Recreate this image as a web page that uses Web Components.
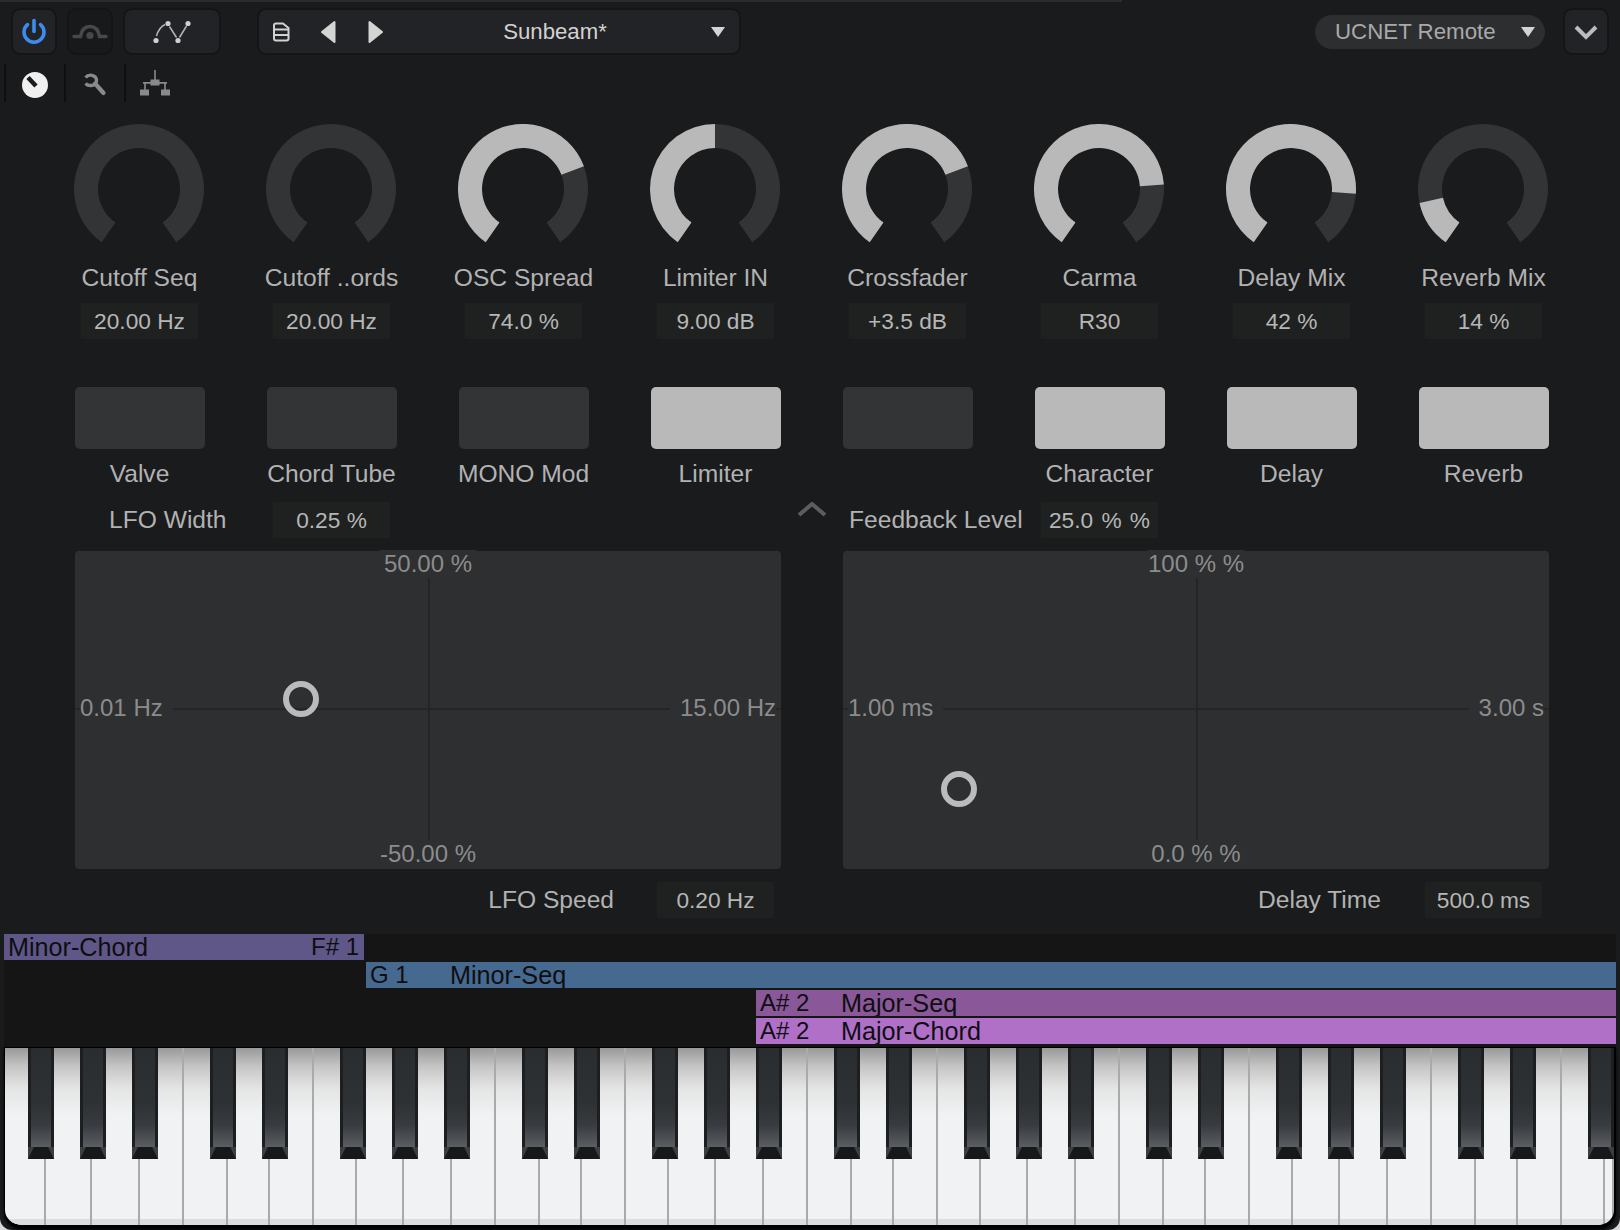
<!DOCTYPE html>
<html>
<head>
<meta charset="utf-8">
<style>
  html, body { margin: 0; background: #d8d8d8; }
  body { font-family: "Liberation Sans", Arial, sans-serif; }
</style>
</head>
<body>
<rs-app>
  <rs-toolbar></rs-toolbar>
  <rs-tabs></rs-tabs>
  <rs-grid8 slot="knobs">
    <rs-knob frac="0">Cutoff Seq<rs-value slot="value">20.00 Hz</rs-value></rs-knob>
    <rs-knob frac="0">Cutoff ..ords<rs-value slot="value">20.00 Hz</rs-value></rs-knob>
    <rs-knob frac="0.74">OSC Spread<rs-value slot="value">74.0 %</rs-value></rs-knob>
    <rs-knob frac="0.5">Limiter IN<rs-value slot="value">9.00 dB</rs-value></rs-knob>
    <rs-knob frac="0.74">Crossfader<rs-value slot="value">+3.5 dB</rs-value></rs-knob>
    <rs-knob frac="0.797">Carma<rs-value slot="value">R30</rs-value></rs-knob>
    <rs-knob frac="0.825">Delay Mix<rs-value slot="value">42 %</rs-value></rs-knob>
    <rs-knob frac="0.147">Reverb Mix<rs-value slot="value">14 %</rs-value></rs-knob>
  </rs-grid8>
  <rs-grid8 slot="toggles">
    <rs-toggle>Valve</rs-toggle>
    <rs-toggle>Chord Tube</rs-toggle>
    <rs-toggle>MONO Mod</rs-toggle>
    <rs-toggle on>Limiter</rs-toggle>
    <rs-toggle></rs-toggle>
    <rs-toggle on>Character</rs-toggle>
    <rs-toggle on>Delay</rs-toggle>
    <rs-toggle on>Reverb</rs-toggle>
  </rs-grid8>
  <rs-xy-section slot="xy">
    <rs-param slot="head-left" style="padding-left:34px"><span style="width:164px">LFO Width</span><rs-value>0.25 %</rs-value></rs-param>
    <rs-param slot="head-right" style="padding-left:6px"><span style="width:192px">Feedback Level</span><rs-value style="word-spacing:2px">25.0 % %</rs-value></rs-param>
    <rs-pad slot="pad-left" hx="226" hy="148" t="50.00 %" b="-50.00 %" l="0.01 Hz" r="15.00 Hz"></rs-pad>
    <rs-pad slot="pad-right" hx="116" hy="238" t="100 % %" b="0.0 % %" l="1.00 ms" r="3.00 s"></rs-pad>
    <rs-param slot="foot-left" style="justify-content:flex-end;padding-right:7px;gap:43px"><span>LFO Speed</span><rs-value>0.20 Hz</rs-value></rs-param>
    <rs-param slot="foot-right" style="justify-content:flex-end;padding-right:7px;gap:44px"><span>Delay Time</span><rs-value>500.0 ms</rs-value></rs-param>
  </rs-xy-section>
  <rs-lanes slot="lanes">
    <rs-note start="0" end="360" color="#5e5788" style="justify-content:space-between"><span style="font-size:25.2px">Minor-Chord</span><span>F# 1</span></rs-note>
    <rs-note start="362" color="#46698f"><span style="width:80px">G 1</span><span style="font-size:25.2px">Minor-Seq</span></rs-note>
    <rs-note start="752" color="#8a5799"><span style="width:81px">A# 2</span><span style="font-size:25.2px">Major-Seq</span></rs-note>
    <rs-note start="752" color="#b070c8"><span style="width:81px">A# 2</span><span style="font-size:25.2px">Major-Chord</span></rs-note>
  </rs-lanes>
  <rs-keyboard slot="keys"></rs-keyboard>
</rs-app>

<script>
class RsApp extends HTMLElement {
  connectedCallback() {
    this.attachShadow({ mode: 'open' });
    this.shadowRoot.innerHTML = `
      <style>
        :host {
          display: block;
          width: 1620px;
          height: 1230px;
          overflow: hidden;
          background: #1a1b1d;
          border-radius: 0 0 12px 12px;
          color: #b2b2b2;
          font: 24.6px/28px "Liberation Sans", Arial, sans-serif;
        }
        .strip { width: 1122px; height: 2px; background: #2b2c2e; }
        .knobs { display: block; margin-top: 22px; }
        .toggles { display: block; margin-top: 47px; }
      </style>
      <div class="strip"></div>
      <slot></slot>
      <div class="knobs"><slot name="knobs"></slot></div>
      <div class="toggles"><slot name="toggles"></slot></div>
      <slot name="xy"></slot>
      <slot name="lanes"></slot>
      <slot name="keys"></slot>
    `;
  }
}

class RsToolbar extends HTMLElement {
  connectedCallback() {
    this.attachShadow({ mode: 'open' });
    this.shadowRoot.innerHTML = `
      <style>
        :host {
          display: flex;
          align-items: center;
          height: 47px;
          margin-top: 6px;
          padding: 0 11px;
        }
        .btn {
          box-sizing: border-box;
          display: flex;
          align-items: center;
          justify-content: center;
          width: 46px;
          height: 47px;
          margin-right: 10px;
          background: #222326;
          border: 2px solid #141517;
          border-radius: 9px;
        }
        .btn.dim { background: #18191b; }
        .btn.wide { width: 98px; margin-right: 36px; }
        .preset {
          box-sizing: border-box;
          display: flex;
          align-items: center;
          width: 484px;
          height: 47px;
          padding: 0 14px 0 13px;
          background: #222326;
          border: 2px solid #141517;
          border-radius: 9px;
          color: #d2d2d2;
          font-size: 22.2px;
        }
        .title { flex: 1; padding-left: 15px; text-align: center; }
        .pill {
          box-sizing: border-box;
          display: flex;
          align-items: center;
          width: 230px;
          height: 34px;
          margin-left: auto;
          padding: 0 10px 0 20px;
          background: #2d2e30;
          border-radius: 17px;
          color: #a9a9a9;
          font-size: 22.3px;
          white-space: nowrap;
        }
        .pill span { flex: 1; }
        .btn.last { margin: 0 0 0 18px; }
        svg { display: block; }
      </style>
      <div class="btn">
        <svg width="28" height="28" viewBox="0 0 28 28" fill="none" stroke="#3d8bef" stroke-width="3.6" stroke-linecap="round">
          <path d="M7.5 6.6a10 10 0 1 0 13 0"/><path d="M14 2.5v11"/>
        </svg>
      </div>
      <div class="btn dim">
        <svg width="38" height="24" viewBox="0 0 38 24" fill="none" stroke="#47484a" stroke-width="3.400" stroke-linecap="round">
          <path d="M3 16.500h6.500C10.500 10 14 6.500 19 6.500s8.500 3.500 9.500 10H35"/>
          <circle cx="19" cy="15.500" r="3.600" fill="#47484a" stroke="none"/>
        </svg>
      </div>
      <div class="btn wide">
        <svg width="42" height="26" viewBox="0 0 42 26" fill="none" stroke="#b4b4b4" stroke-width="1.500">
          <path d="M5.500 17C7 11.500 10 7.500 14 5.500"/><path d="M18.500 7.500L25.500 18.500"/><path d="M28.500 18.500L35.500 7"/>
          <g fill="#cfcfcf" stroke="none">
            <circle cx="5" cy="21.500" r="2.600"/><circle cx="17" cy="4.500" r="2.600"/>
            <circle cx="27" cy="21.500" r="2.600"/><circle cx="37" cy="4.500" r="2.600"/>
          </g>
        </svg>
      </div>
      <div class="preset">
        <svg width="18" height="20" viewBox="0 0 18 20" fill="none" stroke="#d2d2d2" stroke-width="2" stroke-linejoin="round">
          <path d="M2 3.500Q2 1.500 4 1.500H11L16.500 6V16.500Q16.500 18.500 14.500 18.500H4Q2 18.500 2 16.500Z"/>
          <path d="M2 7.500H16.500M2 13H16.500"/>
        </svg>
        <svg style="margin-left:30px" width="16" height="24" viewBox="0 0 16 24" fill="#d4d4d4" stroke="#d4d4d4" stroke-width="2" stroke-linejoin="round">
          <path d="M14.500 2v20L2 12z"/>
        </svg>
        <svg style="margin-left:32px" width="16" height="24" viewBox="0 0 16 24" fill="#d4d4d4" stroke="#d4d4d4" stroke-width="2" stroke-linejoin="round">
          <path d="M1.500 2v20L14 12z"/>
        </svg>
        <div class="title">Sunbeam*</div>
        <svg width="14" height="10" viewBox="0 0 14 10" fill="#d4d4d4"><path d="M0 0h14L7 10z"/></svg>
      </div>
      <div class="pill">
        <span>UCNET Remote</span>
        <svg width="14" height="10" viewBox="0 0 14 10" fill="#d4d4d4"><path d="M0 0h14L7 10z"/></svg>
      </div>
      <div class="btn last">
        <svg width="24" height="16" viewBox="0 0 24 16" fill="none" stroke="#bcbcbc" stroke-width="4">
          <path d="M2 3l10 10L22 3"/>
        </svg>
      </div>
    `;
  }
}

class RsTabs extends HTMLElement {
  connectedCallback() {
    this.attachShadow({ mode: 'open' });
    this.shadowRoot.innerHTML = `
      <style>
        :host {
          display: flex;
          height: 38px;
          margin-top: 9px;
          padding-left: 4px;
        }
        .tab {
          box-sizing: border-box;
          display: flex;
          align-items: center;
          justify-content: center;
          width: 60px;
          border-left: 2px solid #0e0f10;
        }
        svg { display: block; }
      </style>
      <div class="tab">
        <svg width="30" height="38" viewBox="0 0 30 38">
          <circle cx="15" cy="21" r="13" fill="#f0f0f0"/>
          <path d="M16 22L8 13.500" stroke="#1a1b1d" stroke-width="4.500"/>
        </svg>
      </div>
      <div class="tab">
        <svg width="30" height="38" viewBox="0 0 30 38" fill="none" stroke="#8a8a8a">
          <path d="M5.500 13.500C9 9.500 15.500 11 16.500 15.500C17 19 14 22 10.500 21.500C8.500 21.500 6.500 20.500 5.500 19.500" stroke-width="3.400"/>
          <path d="M15 19.500L23.500 29" stroke-width="4.200" stroke-linecap="round"/>
        </svg>
      </div>
      <div class="tab">
        <svg width="32" height="38" viewBox="0 0 32 38" fill="#8a8a8a">
          <path d="M15.200 6h1.600v10h-1.600z"/>
          <rect x="11.500" y="15.500" width="9" height="6"/>
          <path d="M4 18h24v1.800h-1.200v7H25.200v-7H6.800v7H5.200v-7H4z" />
          <rect x="1" y="25.500" width="9" height="6"/>
          <rect x="22" y="25.500" width="9" height="6"/>
        </svg>
      </div>
    `;
  }
}

class RsGrid8 extends HTMLElement {
  connectedCallback() {
    this.attachShadow({ mode: 'open' });
    this.shadowRoot.innerHTML = `
      <style>
        :host {
          display: grid;
          grid-template-columns: repeat(8, 192px);
          padding-left: 43px;
        }
      </style>
      <slot></slot>
    `;
  }
}

class RsValue extends HTMLElement {
  connectedCallback() {
    this.attachShadow({ mode: 'open' });
    this.shadowRoot.innerHTML = `
      <style>
        :host {
          box-sizing: border-box;
          flex: none;
          display: flex;
          align-items: center;
          justify-content: center;
          width: 117px;
          height: 36px;
          background: #1f2121;
          color: #b6b6b6;
          font-size: 22.7px;
          white-space: nowrap;
        }
      </style>
      <slot></slot>
    `;
  }
}

// knob arc runs 290 degrees with the gap at the bottom
function ringPath(cx, cy, a0, a1) {
  const R = 65, r = 41;
  const pt = (rad, a) => {
    const t = a * Math.PI / 180;
    return (cx + rad * Math.sin(t)).toFixed(2) + ' ' + (cy - rad * Math.cos(t)).toFixed(2);
  };
  const big = a1 - a0 > 180 ? 1 : 0;
  return 'M' + pt(R, a0) + 'A' + R + ' ' + R + ' 0 ' + big + ' 1 ' + pt(R, a1) +
    'L' + pt(r, a1) + 'A' + r + ' ' + r + ' 0 ' + big + ' 0 ' + pt(r, a0) + 'Z';
}

class RsKnob extends HTMLElement {
  connectedCallback() {
    const frac = parseFloat(this.getAttribute('frac')) || 0;
    const end = -145 + 290 * frac;
    this.attachShadow({ mode: 'open' });
    this.shadowRoot.innerHTML = `
      <style>
        :host {
          display: flex;
          flex-direction: column;
          align-items: center;
          width: 192px;
          height: 216px;
        }
        svg { display: block; }
        .label { height: 28px; margin: 10px 0 11px 1px; white-space: nowrap; }
        ::slotted(rs-value) { margin-left: 1px; }
      </style>
      <svg width="130" height="130" viewBox="0 0 130 130">
        <path d="${ringPath(65, 65, -145, 145)}" fill="#333436"/>
        ${frac > 0 ? `<path d="${ringPath(65, 65, -145, end)}" fill="#b9b9b9"/>` : ''}
      </svg>
      <div class="label"><slot></slot></div>
      <slot name="value"></slot>
    `;
  }
}

class RsToggle extends HTMLElement {
  connectedCallback() {
    this.attachShadow({ mode: 'open' });
    this.shadowRoot.innerHTML = `
      <style>
        :host {
          display: flex;
          flex-direction: column;
          align-items: center;
          width: 192px;
        }
        .box { width: 130px; height: 62px; margin-left: 2px; background: #333436; border-radius: 5px; }
        :host([on]) .box { background: #b9b9b9; }
        .label { height: 28px; margin: 11px 0 0 1px; white-space: nowrap; }
      </style>
      <div class="box"></div>
      <div class="label"><slot></slot></div>
    `;
  }
}

class RsParam extends HTMLElement {
  connectedCallback() {
    this.attachShadow({ mode: 'open' });
    this.shadowRoot.innerHTML = `
      <style>
        :host {
          display: flex;
          align-items: center;
          height: 36px;
          white-space: nowrap;
        }
      </style>
      <slot></slot>
    `;
  }
}

class RsXySection extends HTMLElement {
  connectedCallback() {
    this.attachShadow({ mode: 'open' });
    this.shadowRoot.innerHTML = `
      <style>
        :host {
          display: grid;
          grid-template-columns: 706px 62px 706px;
          grid-template-rows: 36px 318px 36px;
          row-gap: 13px;
          margin-top: 14px;
          padding-left: 75px;
        }
        .up { display: flex; justify-content: center; }
        svg { display: block; }
      </style>
      <slot name="head-left"></slot>
      <div class="up">
        <svg width="30" height="16" viewBox="0 0 30 16" fill="none" stroke="#5c5d5f" stroke-width="4">
          <path d="M2 13L15 2l13 11"/>
        </svg>
      </div>
      <slot name="head-right"></slot>
      <slot name="pad-left"></slot>
      <div></div>
      <slot name="pad-right"></slot>
      <slot name="foot-left"></slot>
      <div></div>
      <slot name="foot-right"></slot>
    `;
  }
}

class RsPad extends HTMLElement {
  connectedCallback() {
    const a = n => this.getAttribute(n);
    this.attachShadow({ mode: 'open' });
    this.shadowRoot.innerHTML = `
      <style>
        :host {
          position: relative;
          display: grid;
          grid-template-columns: 1fr auto 1fr;
          grid-template-rows: 26px 1fr 26px;
          align-items: center;
          box-sizing: border-box;
          padding: 0 5px 2px;
          background: #2e2f31;
          border-radius: 4px;
          color: #8c8c8c;
          font-size: 24px;
          white-space: nowrap;
        }
        .v { position: absolute; left: 50%; top: 26px; bottom: 28px; width: 2px; background: #242527; }
        .h { position: absolute; left: 0; right: 0; top: 157px; height: 2px; background: #242527; }
        .lab { position: relative; background: #2e2f31; }
        .t { grid-area: 1 / 2; text-align: center; }
        .b { grid-area: 3 / 2; text-align: center; }
        .m { grid-area: 2 / 1 / 2 / 4; display: flex; justify-content: space-between; margin-top: -3px; }
        .l { padding-right: 10px; }
        .r { padding-left: 10px; }
        .handle {
          position: absolute;
          box-sizing: border-box;
          width: 36px;
          height: 36px;
          margin: -18px 0 0 -18px;
          border: 6px solid #b9bbbc;
          border-radius: 50%;
        }
      </style>
      <div class="v"></div>
      <div class="h"></div>
      <div class="lab t">${a('t')}</div>
      <div class="m"><div class="lab l">${a('l')}</div><div class="lab r">${a('r')}</div></div>
      <div class="lab b">${a('b')}</div>
      <div class="handle" style="left:${a('hx')}px;top:${a('hy')}px"></div>
    `;
  }
}

class RsLanes extends HTMLElement {
  connectedCallback() {
    this.attachShadow({ mode: 'open' });
    this.shadowRoot.innerHTML = `
      <style>
        :host {
          display: flex;
          flex-direction: column;
          gap: 2px;
          width: 1612px;
          height: 113px;
          margin: 16px 0 0 4px;
          background: #151516;
        }
      </style>
      <slot></slot>
    `;
  }
}

class RsNote extends HTMLElement {
  connectedCallback() {
    const start = +this.getAttribute('start');
    const end = this.getAttribute('end');
    this.style.marginLeft = start + 'px';
    this.style.background = this.getAttribute('color');
    if (end) this.style.width = (end - start) + 'px';
    this.attachShadow({ mode: 'open' });
    this.shadowRoot.innerHTML = `
      <style>
        :host {
          box-sizing: border-box;
          display: flex;
          height: 26px;
          padding: 0 5px 0 4px;
          overflow: hidden;
          color: #0e0e10;
          font-size: 24px;
          line-height: 26px;
          white-space: nowrap;
        }
      </style>
      <slot></slot>
    `;
  }
}

class RsKeyboard extends HTMLElement {
  connectedCallback() {
    // split points of the white keys and offsets of the black keys, one octave = 312px
    const splits = [44.5, 90.7, 139, 182.7, 226.7, 268.7, 313];
    const blacks = [28, 80, 132, 210, 262];
    const left = 5, right = 1614;
    let whites = '', prev = left;
    for (let k = 0; prev < right; k++) {
      for (const s of splits) {
        const x = Math.min(s + 312 * k + 1, right);
        if (x <= prev) continue;
        whites += `<div class="w" style="width:${(x - prev).toFixed(1)}px"></div>`;
        prev = x;
      }
    }
    let keys = '';
    for (let k = 0; k < 6; k++) {
      for (const b of blacks) {
        const x = b + 312 * k;
        if (x + 26 <= right) keys += `<div class="b" style="left:${x - left}px"></div>`;
      }
    }
    this.attachShadow({ mode: 'open' });
    this.shadowRoot.innerHTML = `
      <style>
        :host {
          position: relative;
          display: block;
          box-sizing: border-box;
          width: 1612px;
          height: 181px;
          margin: 0 0 0 4px;
          overflow: hidden;
          background: #000;
          border: solid #000;
          border-width: 1px 2px 3px 1px;
          border-radius: 0 0 18px 18px;
          box-shadow: 0 2px 3px #000;
        }
        .row { display: flex; height: 100%; }
        .w {
          flex: none;
          box-sizing: border-box;
          height: 100%;
          border-right: 2px solid #a9aaac;
          background:
            linear-gradient(to bottom, transparent calc(100% - 6px), #dcddde calc(100% - 6px)),
            linear-gradient(to bottom, #999 0, #c4c4c4 18px, #e4e4e4 40px, #f1f2f4 68px);
        }
        .b {
          position: absolute;
          top: 0;
          width: 26px;
          height: 111px;
          background: linear-gradient(to bottom, #1c1e20 99px, #3c3f42 99px);
        }
        .b::before {
          content: "";
          position: absolute;
          left: 3px;
          right: 3px;
          top: 0;
          height: 99px;
          background: linear-gradient(to bottom, #2a2d30 0, #2e3134 55%, #383b3f 78%, #5a5e62 100%);
        }
        .b::after {
          content: "";
          position: absolute;
          left: 0;
          right: 0;
          bottom: 0;
          height: 12px;
          background: #17181a;
          clip-path: polygon(6px 0, 20px 0, 26px 100%, 0 100%);
        }
      </style>
      <div class="row">${whites}</div>
      ${keys}
    `;
  }
}

customElements.define('rs-value', RsValue);
customElements.define('rs-knob', RsKnob);
customElements.define('rs-toggle', RsToggle);
customElements.define('rs-grid8', RsGrid8);
customElements.define('rs-param', RsParam);
customElements.define('rs-pad', RsPad);
customElements.define('rs-xy-section', RsXySection);
customElements.define('rs-note', RsNote);
customElements.define('rs-lanes', RsLanes);
customElements.define('rs-keyboard', RsKeyboard);
customElements.define('rs-toolbar', RsToolbar);
customElements.define('rs-tabs', RsTabs);
customElements.define('rs-app', RsApp);
</script>
</body>
</html>
